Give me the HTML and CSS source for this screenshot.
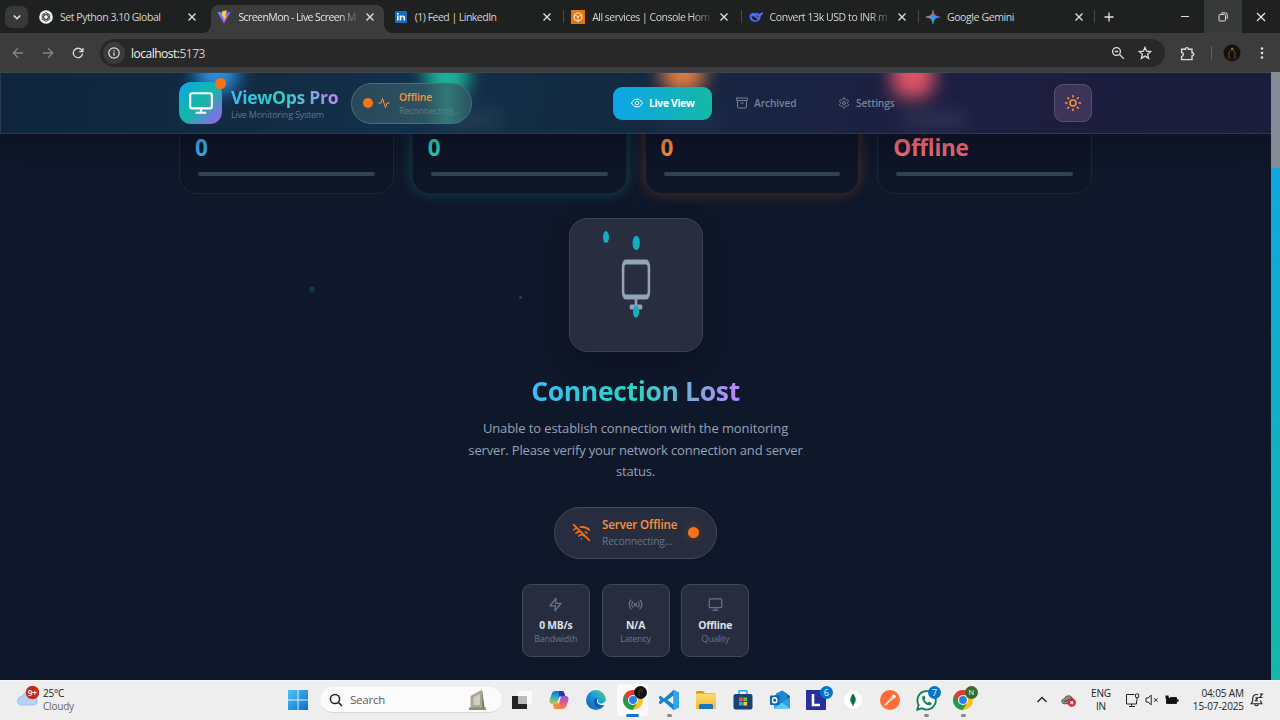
FILE: index.html
```html
<!DOCTYPE html>
<html lang="en">
<head>
<meta charset="utf-8">
<title>ScreenMon - Live Screen Monitor</title>
<link rel="stylesheet" href="styles.css">
</head>
<body>
<svg class="defs" aria-hidden="true">
  <defs>
    <linearGradient id="gGem" x1="0" x2="1"><stop offset="0" stop-color="#f6b51e"/><stop offset=".4" stop-color="#3d8df5"/><stop offset="1" stop-color="#4a8cf7"/></linearGradient>
    <linearGradient id="gWin" x1="0" y1="0" x2="1" y2="1"><stop offset="0" stop-color="#4cc4f5"/><stop offset="1" stop-color="#0a6fd0"/></linearGradient>
    <linearGradient id="gEdge" x1="0" y1="1" x2="1" y2="0"><stop offset="0" stop-color="#0b55a8"/><stop offset=".55" stop-color="#1b9de0"/><stop offset="1" stop-color="#5fd36a"/></linearGradient>
    <linearGradient id="gCopA" x1="0" y1="0" x2="0" y2="1"><stop offset="0" stop-color="#1769d6"/><stop offset=".5" stop-color="#2bb5c9"/><stop offset="1" stop-color="#e8bd2c"/></linearGradient>
    <linearGradient id="gCopB" x1="0" y1="0" x2="0" y2="1"><stop offset="0" stop-color="#8b5be8"/><stop offset=".5" stop-color="#e4578f"/><stop offset="1" stop-color="#f08a4a"/></linearGradient>
    <linearGradient id="gFold" x1="0" y1="0" x2="0" y2="1"><stop offset="0" stop-color="#ffdc6b"/><stop offset="1" stop-color="#f5b92f"/></linearGradient>
    <linearGradient id="gVite" x1="0" y1="0" x2="1" y2="1"><stop offset="0" stop-color="#41a6ff"/><stop offset=".6" stop-color="#a650fa"/><stop offset="1" stop-color="#8a3ff0"/></linearGradient>
    <linearGradient id="gDrop" x1="0" y1="0" x2="1" y2="1"><stop offset="0" stop-color="#0ea5e9"/><stop offset="1" stop-color="#14b8a6"/></linearGradient>
    <symbol id="close" viewBox="0 0 10 10"><path d="M1.5 1.5 8.5 8.5M8.5 1.5 1.5 8.5" stroke="#dcdedc" stroke-width="1.4" fill="none"/></symbol>
    <symbol id="monitor" viewBox="0 0 24 24"><rect x="2" y="3" width="20" height="14" rx="2"/><path d="M8 21h8M12 17v4"/></symbol>
    <symbol id="chrome" viewBox="0 0 24 24">
      <circle cx="12" cy="12" r="12" fill="#fbc116"/>
      <path d="M1.6 6A12 12 0 0 0 11.5 24L17.2 15 12 12Z" fill="#229a4b"/>
      <path d="M1.6 6A12 12 0 0 1 22.4 6H12L6.8 15Z" fill="#e33b2e"/>
      <circle cx="12" cy="12" r="6" fill="#fff"/><circle cx="12" cy="12" r="4.7" fill="#2f7de8"/>
    </symbol>
  </defs>
</svg>

<div class="tabstrip">
  <div class="tabsearch"><svg width="10" height="10" viewBox="0 0 10 10"><path d="M1.8 3.5 5 6.7l3.2-3.2" stroke="#e6e6e6" stroke-width="1.6" fill="none"/></svg></div>
  <div class="tabs">
    <div class="tab first"><svg class="fav" viewBox="0 0 14 14"><circle cx="7" cy="7" r="6.8" fill="#f4f4f4"/><g fill="none" stroke="#333" stroke-width=".8"><ellipse cx="7" cy="7" rx="2.2" ry="4.4"/><ellipse cx="7" cy="7" rx="2.2" ry="4.4" transform="rotate(60 7 7)"/><ellipse cx="7" cy="7" rx="2.2" ry="4.4" transform="rotate(120 7 7)"/></g></svg><span class="label t1">Set Python 3.10 Global</span><svg class="x"><use href="#close"/></svg></div>
    <div class="tab active"><svg class="fav" viewBox="0 0 14 14"><path d="M.3 1.8 7 13.8 13.7 1.8 7 3Z" fill="url(#gVite)"/><path d="M9.8.3 5.2 1.2 4.9 6.3l1.5-.3-.4 2.3 1.1-.3L6.6 10.9l3.2-5.5-1.8.3.9-2.1z" fill="#ffcf2e"/></svg><span class="label t2">ScreenMon - Live Screen M</span><svg class="x"><use href="#close"/></svg></div>
    <div class="tab"><svg class="fav" viewBox="0 0 14 14"><rect x="1" y="1" width="12" height="12" rx="1" fill="#1769c2"/><path d="M3 5.6h1.6v5H3zM3 3h1.6v1.6H3zM5.7 5.6h1.5v.8c.9-1.4 3.9-1.3 3.9 1.3v2.9H9.5V8c0-1.7-2.2-1.5-2.2 0v2.6H5.7z" fill="#fff"/></svg><span class="label t3">(1) Feed | LinkedIn</span><svg class="x"><use href="#close"/></svg></div>
    <div class="tab sep"><svg class="fav" viewBox="0 0 14 14"><rect width="14" height="14" fill="#e8750c"/><path d="M7 2.6 10.8 4.6V9.2L7 11.4 3.2 9.2V4.6ZM3.2 4.6 7 6.7l3.8-2.1M7 6.7v4.7" fill="none" stroke="#fff" stroke-width=".9"/></svg><span class="label t4">All services | Console Hom</span><svg class="x"><use href="#close"/></svg></div>
    <div class="tab sep"><svg class="fav" viewBox="0 0 14 14"><path d="M.5 6.2C1 3.3 4.300 2 7 3.400c1-.8 1-.9 1.300-1 .3 1 .9 1.500 2.300 1.400C11 2.800 12.600 3.500 14 2.300c.1 2-1 3-2.300 3.500C12 9 9 12.800 5.300 11.800 2 11 .3 9 .5 6.200Z" fill="#4d6bfe"/><path d="M2.300 6.500C5 5.500 7.300 7.500 8.800 10.300 6 10.800 3 9.500 2.300 6.500Z" fill="#1f2120"/><path d="M7.600 6c1-.4 2 .3 2.100 1.400" stroke="#1f2120" fill="none"/></svg><span class="label t5">Convert 13k USD to INR m</span><svg class="x"><use href="#close"/></svg></div>
    <div class="tab sep end"><svg class="fav" viewBox="0 0 14 14"><path d="M7 0C7.600 4.600 9.400 6.400 14 7 9.400 7.600 7.600 9.400 7 14 6.400 9.400 4.600 7.600 0 7 4.600 6.400 6.400 4.600 7 0Z" fill="url(#gGem)" stroke="url(#gGem)" stroke-width=".6"/><path d="M7 0c.3 2.600 1 4.200 2.300 5.300L6 5C6.600 3.900 6.800 2 7 0Z" fill="#e9473b"/><path d="M7 14c-.3-2.600-1-4.200-2.300-5.300L8 9C7.400 10.100 7.200 12 7 14Z" fill="#3bb55e"/></svg><span class="label t6">Google Gemini</span><svg class="x"><use href="#close"/></svg></div>
  </div>
  <svg class="plus" viewBox="0 0 10 10"><path d="M5 .5v9M.5 5h9" stroke="#e3e3e3" stroke-width="1.300"/></svg>
  <div class="winbtns">
    <span><svg width="10" height="10"><path d="M1 4.500h8" stroke="#ddd"/></svg></span>
    <span class="hover"><svg width="10" height="10" viewBox="0 0 10 10" fill="none" stroke="#ddd"><rect x="1" y="2.500" width="6.500" height="6.500" rx="1"/><path d="M3 .9h4.500A1.600 1.600 0 0 1 9.200 2.500V7"/></svg></span>
    <span><svg width="10" height="10"><path d="m1 1 8 8M9 1 1 9" stroke="#eee" stroke-width="1.100"/></svg></span>
  </div>
</div>

<div class="toolbar">
  <div class="nav">
    <svg viewBox="0 0 12 12" class="dim"><path d="M11 6H1.500M6 1.300 1.300 6 6 10.700"/></svg>
    <svg viewBox="0 0 12 12" class="dim"><path d="M1 6h9.500M6 1.300 10.700 6 6 10.700"/></svg>
    <svg viewBox="0 0 12 12"><path d="M10.600 6.700A4.700 4.700 0 1 1 9.700 3.100L10.800 4.500M10.900 1v3.700H7.200"/></svg>
  </div>
  <div class="omnibox">
    <span class="info"><svg width="12" height="12" viewBox="0 0 12 12" fill="none" stroke="#dfe1df" stroke-width="1.200"><circle cx="6" cy="6" r="5.200"/><path d="M6 5.200v3.600M6 3v1.200"/></svg></span>
    <span class="url"><b>localhost:</b>5173</span>
    <svg class="ob" viewBox="0 0 14 14"><circle cx="5.500" cy="5.500" r="3.900"/><path d="m8.500 8.500 4.400 4.400M3.800 5.500h3.400"/></svg>
    <svg class="ob" viewBox="0 0 14 14"><path d="M7 1.400 8.600 5.200l4.200.3-3.200 2.700 1 4.100L7 10.100l-3.600 2.200 1-4.100L1.200 5.500l4.200-.3Z"/></svg>
  </div>
  <svg class="ext" viewBox="0 0 14 14"><path d="M1.500 3H5c0-2 2.800-2 2.800 0h3.400v3.300c2.200 0 2.200 3 0 3V12.700H1.500V9.700c2.200-.2 2.200-3.400 0-3.600Z"/></svg>
  <i class="tsep"></i>
  <svg class="avatar" viewBox="0 0 18 18"><circle cx="9" cy="9" r="8.500" fill="#16110c"/><path d="M6 15V9l1.500-3M10.500 6l1.500 3-.5 2 1 4" stroke="#4a361b" stroke-width="1.600" fill="none"/><circle cx="9.200" cy="5" r="1.300" fill="#8b7142"/></svg>
  <svg class="dots" viewBox="0 0 4 14" fill="#ddd"><circle cx="2" cy="2.500" r="1.300"/><circle cx="2" cy="7" r="1.300"/><circle cx="2" cy="11.500" r="1.300"/></svg>
</div>

<div class="view">
  <div class="page">
    <header class="topbar">
      <i class="glow g1"></i><i class="glow g2"></i><i class="glow g3"></i><i class="glow g4"></i><i class="haze h1"></i><i class="haze h2"></i><i class="haze h3"></i>
      <div class="bar">
        <div class="logo"><svg class="line" width="26" height="26"><use href="#monitor"/></svg><i></i></div>
        <div class="brand"><h1><span>ViewOps Pro</span></h1><p>Live Monitoring System</p></div>
        <div class="status">
          <i></i>
          <svg width="12" height="12" viewBox="0 0 24 24" class="line"><path d="M22 12h-4l-3 9L9 3l-3 9H2"/></svg>
          <div><b>Offline</b><small>Reconnecting...</small></div>
        </div>
        <nav>
          <a class="on"><svg class="line" width="12" height="12" viewBox="0 0 24 24"><path d="M1 12s4-8 11-8 11 8 11 8-4 8-11 8S1 12 1 12Z"/><circle cx="12" cy="12" r="3.500"/></svg><span class="n1">Live View</span></a>
          <a class="arch"><svg class="line" width="12" height="12" viewBox="0 0 24 24"><rect x="1" y="2" width="22" height="5" rx="1"/><path d="M3 7v13a2 2 0 0 0 2 2h14a2 2 0 0 0 2-2V7M9.500 12h5"/></svg><span class="n2">Archived</span></a>
          <a><svg class="line" width="12" height="12" viewBox="0 0 24 24"><path d="M12.220 2h-.44a2 2 0 0 0-2 2v.18a2 2 0 0 1-1 1.730l-.43.25a2 2 0 0 1-2 0l-.15-.08a2 2 0 0 0-2.730.73l-.22.38a2 2 0 0 0 .73 2.730l.15.1a2 2 0 0 1 1 1.720v.51a2 2 0 0 1-1 1.740l-.15.09a2 2 0 0 0-.73 2.730l.22.38a2 2 0 0 0 2.730.73l.15-.08a2 2 0 0 1 2 0l.43.25a2 2 0 0 1 1 1.730V20a2 2 0 0 0 2 2h.44a2 2 0 0 0 2-2v-.18a2 2 0 0 1 1-1.730l.43-.25a2 2 0 0 1 2 0l.15.08a2 2 0 0 0 2.730-.73l.22-.39a2 2 0 0 0-.73-2.730l-.15-.08a2 2 0 0 1-1-1.740v-.5a2 2 0 0 1 1-1.740l.15-.09a2 2 0 0 0 .73-2.730l-.22-.38a2 2 0 0 0-2.730-.73l-.15.08a2 2 0 0 1-2 0l-.43-.25a2 2 0 0 1-1-1.730V4a2 2 0 0 0-2-2z"/><circle cx="12" cy="12" r="3"/></svg><span class="n3">Settings</span></a>
        </nav>
        <div class="theme"><svg class="line" width="18" height="18" viewBox="0 0 24 24"><circle cx="12" cy="12" r="4"/><path d="M12 2v2M12 20v2M4.930 4.930l1.410 1.410M17.660 17.660l1.410 1.410M2 12h2M20 12h2M6.340 17.660l-1.410 1.410M19.070 4.930l-1.410 1.410"/></svg></div>
      </div>
    </header>

    <section class="stats">
      <div class="stat blue"><b>0</b><i></i></div>
      <div class="stat teal"><b>0</b><i></i></div>
      <div class="stat orange"><b>0</b><i></i></div>
      <div class="stat red"><b>Offline</b><i></i></div>
    </section>

    <i class="particle p1"></i><i class="particle p2"></i>

    <main class="lost">
      <div class="screen">
        <svg width="134" height="134" viewBox="0 0 134 134">
          <svg x="51.500" y="36.500" width="31" height="60" viewBox="0 0 24 24" preserveAspectRatio="none" fill="none" stroke="#94a3b8" stroke-width="2" stroke-linecap="round"><rect x="2" y="3" width="20" height="14" rx="2"/><path d="M8 21h8M12 17v4"/></svg>
          <ellipse cx="37" cy="19" rx="3" ry="6" fill="url(#gDrop)"/><ellipse cx="67.200" cy="25" rx="3.700" ry="7.200" fill="url(#gDrop)"/><ellipse cx="67" cy="93.500" rx="3" ry="6.200" fill="url(#gDrop)"/>
        </svg>
      </div>
      <h2><span>Connection Lost</span></h2>
      <p class="l1">Unable to establish connection with the monitoring</p>
      <p class="l2">server. Please verify your network connection and server</p>
      <p class="l3">status.</p>
      <div class="server">
        <svg class="line" width="19" height="19" viewBox="0 0 24 24"><path d="M12 20h.01M8.500 16.430a5 5 0 0 1 7 0M2 8.820a15 15 0 0 1 4.170-2.650M10.660 5a15 15 0 0 1 11.340 3.760M16.850 11.250a10 10 0 0 1 2.220 1.680M5 13a10 10 0 0 1 5.240-2.760M2 2l20 20"/></svg>
        <div><b>Server Offline</b><small>Reconnecting...</small></div>
        <i></i>
      </div>
      <div class="metrics">
        <div><svg class="line" width="15" height="15" viewBox="0 0 24 24"><path d="M13 2 3 14h9l-1 8 10-12h-9l1-8z"/></svg><b>0 MB/s</b><small>Bandwidth</small></div>
        <div><svg class="line" width="15" height="15" viewBox="0 0 24 24"><circle cx="12" cy="12" r="2"/><path d="M4.900 19.100C1 15.200 1 8.800 4.900 4.900M7.800 16.200c-2.300-2.300-2.300-6.100 0-8.500M16.200 7.800c2.300 2.300 2.300 6.100 0 8.500M19.100 4.900C23 8.800 23 15.100 19.100 19"/></svg><b>N/A</b><small>Latency</small></div>
        <div><svg class="line" width="15" height="15"><use href="#monitor"/></svg><b>Offline</b><small>Quality</small></div>
      </div>
    </main>
  </div>
  <div class="scroll"><i></i></div>
</div>

<footer class="taskbar">
  <div class="weather">
    <svg width="24" height="24" viewBox="0 0 24 24"><path d="M6 20h12.500a4 4 0 0 0 .5-7.900A6.500 6.500 0 0 0 7 11.500 4.300 4.300 0 0 0 6 20Z" fill="#b8d2f6" stroke="#8fb5ea" stroke-width=".8"/><circle cx="17.500" cy="7.500" r="6.800" fill="#c42b1c"/><text x="17.300" y="10.900" class="cnt">9+</text></svg>
    <div><span>25°C</span><em>Cloudy</em></div>
  </div>
  <div class="apps">
    <span class="app start"><svg width="20" height="20" viewBox="0 0 20 20" fill="url(#gWin)"><path d="M0 0h9.500v9.500H0zM10.500 0H20v9.500h-9.500zM0 10.500h9.500V20H0zM10.500 10.500H20V20h-9.500z"/></svg></span>
    <div class="search"><svg width="14" height="14" viewBox="0 0 14 14" fill="none" stroke="#222" stroke-width="1.500"><circle cx="6" cy="6" r="4.600"/><path d="m9.400 9.400 3.600 3.600"/></svg><span>Search</span><svg width="17" height="21" viewBox="0 0 17 21"><path d="M1.500 19V7L13 .8 15.500 19Z" fill="#aaa594"/><path d="M4.500 16V8L11 5v11Z" fill="#d2cec2"/><path d="M13 .8 15.500 19h-2Z" fill="#716c5b"/><path d="M0 18.500h17V21H0Z" fill="#918a72"/></svg></div>
    <span class="app"><svg width="20" height="20" viewBox="0 0 20 20"><rect x="6" y="1" width="14" height="13" fill="#fafafa"/><rect x="0" y="6" width="15" height="13" fill="#252525"/><rect x="6" y="6" width="9" height="8" fill="#bbb"/></svg></span>
    <span class="app"><svg width="20" height="20" viewBox="0 0 20 20"><path d="M6.500 1H13L9.500 14H4C0 14 0 11.500 1.200 8L3 3Q3.800 1 6.500 1Z" fill="url(#gCopA)"/><path d="M13.500 19H7L10.500 6H16c4 0 4 2.500 2.800 6L17 17Q16.200 19 13.500 19Z" fill="url(#gCopB)"/><path d="M10 1h3.500c1.500 0 2 2 2.700 5h-4.500c-1 0-1.500 1-2 3Z" fill="#203ea5"/><path d="M10 19H6.500C5 19 4.500 17 4 14h4c1.200 0 1.800-1 2.300-3l1 1Z" fill="#f28c43"/><path d="M10.300 6.800h1.700L9.800 13.200H8.200Z" fill="#f3f0f2"/></svg></span>
    <span class="app"><svg width="20" height="20" viewBox="0 0 20 20"><circle cx="10" cy="10" r="10" fill="url(#gEdge)"/><path d="M8 13C7 8 11 7.400 12 9.500 12.700 11 11.600 12 13.500 13.200 15.500 14.500 18 13.500 18.700 13.200 16 20.300 8.500 18.500 8 13Z" fill="#0e59ac"/><path d="M11.600 8.700c1.300 1.300-.3 3 1.600 4.200 2 1.200 6.200.3 6.700-2.900L20 15 16 15.300c-4.500-.2-6-4-4.400-6.600Z" fill="#eef5f5"/></svg></span>
    <span class="app current"><svg width="20" height="20"><use href="#chrome"/></svg><svg class="badge" width="13" height="13"><circle cx="6.500" cy="6.500" r="6.500" fill="#171009"/><path d="M5 10V5l3-2v4" stroke="#50391b" fill="none"/></svg></span>
    <span class="app run"><svg width="20" height="20" viewBox="0 0 20 20"><path d="M14.500 0 20 2.500v15L14.500 20 5 11.600 1.500 14.200 0 13.200V6.800l1.500-1L5 8.400Z" fill="#1685ce"/><path d="M14.500 5.500v9L8.500 10Z" fill="#eee"/><path d="m14.500 0 5.500 2.500v15L14.500 20Z" fill="#31a5ef"/><path d="M0 8.200 1.500 10 0 11.800Z" fill="#eee"/></svg></span>
    <span class="app"><svg width="20" height="20" viewBox="0 0 20 20"><path d="M0 2.500Q0 1 1.500 1H7l2 2h10v4H0Z" fill="#d99a19"/><rect y="3.500" width="20" height="15.500" rx="1.300" fill="url(#gFold)"/><path d="M3 19v-3.500Q3 14 4.500 14h11Q17 14 17 15.500V19Z" fill="#1876bd"/></svg></span>
    <span class="app"><svg width="20" height="20" viewBox="0 0 20 20"><path d="M6 5V1.500Q6 .7 7 .7h6q1 0 1 .8V5" stroke="#2ca6dc" stroke-width="1.500" fill="none"/><rect x=".5" y="4" width="19" height="15.500" rx="2" fill="#174276"/><path d="M6 7.500h3.700v3.700H6z" fill="#ef5538"/><path d="M10.400 7.500h3.700v3.700h-3.700z" fill="#7cba38"/><path d="M6 11.900h3.700v3.700H6z" fill="#35a7e6"/><path d="M10.400 11.900h3.700v3.700h-3.700z" fill="#fac42c"/></svg></span>
    <span class="app"><svg width="20" height="20" viewBox="0 0 20 20"><path d="m4 6 8-5.500L20 6v12H4Z" fill="#1262ae"/><path d="M6 3.500 12 .8l5 2.700V12H6Z" fill="#1f86cf"/><path d="m20 7-9 6-7-5v10.500h16Z" fill="#2c9fe0"/><path d="m4 18.500 8-6 8 6Z" fill="#54cef5"/><rect y="5.500" width="9.500" height="9.500" rx="1" fill="#0769bd"/><ellipse cx="4.700" cy="10.200" rx="2.200" ry="2.500" fill="none" stroke="#fff" stroke-width="1.400"/></svg></span>
    <span class="app"><svg width="20" height="20"><rect width="20" height="20" fill="#2630a0"/><path d="M7 4v11h7" stroke="#fff" stroke-width="2.600" fill="none"/></svg><b class="badge">6</b></span>
    <span class="app"><svg width="18" height="18" viewBox="0 0 18 18"><circle cx="9" cy="9" r="9" fill="#fff"/><path d="M9 3c4 4 3.500 8 0 11C5.500 11 5 7 9 3Z" fill="#12824c"/><path d="M9 3v12" stroke="#0a4e30"/></svg></span>
    <span class="app"><svg width="20" height="20" viewBox="0 0 20 20"><circle cx="10" cy="10" r="10" fill="#ff6c37"/><path d="m5 14 7-7 1.500 1.500-6 5Z" fill="#fff"/><path d="M4.500 15.200 8 13.500" stroke="#fff"/><circle cx="13.700" cy="6.500" r="2" fill="#fff"/><path d="m9 11 4-3.500" stroke="#ff6c37" stroke-width=".7"/></svg></span>
    <span class="app run"><svg width="21" height="21" viewBox="0 0 24 24"><path d="M1.500 22.500 3 17A10.500 10.500 0 1 1 7 21Z" fill="#fff" stroke="#168051" stroke-width="2.200"/><path d="M8 6.500c-3 2.500 1.500 10.500 7 11 2.500 0 3.500-2 2.500-3L15 13l-1.500 1.500C12 14 10.500 12.500 9.700 11L11 9.500 9.700 6.800Z" fill="#168051"/></svg><b class="badge">7</b></span>
    <span class="app run"><svg width="20" height="20"><use href="#chrome"/></svg><b class="badge green">N</b></span>
  </div>
  <div class="tray">
    <svg class="chev" viewBox="0 0 10 10"><path d="m.5 7 4.500-4.500L9.500 7" stroke="#222" stroke-width="1.300" fill="none"/></svg>
    <svg class="cloud" viewBox="0 0 14 12"><path d="M3 9C-.5 8.500.3 4.500 3 4.500 4.500.5 10 1 10.500 4L13 6v3Z" fill="#8d8d8d" stroke="#444" stroke-width=".8"/><path d="m3 7 8-3" stroke="#444"/><circle cx="10" cy="8" r="3.900" fill="#dc2638"/><path d="m8.700 6.700 2.600 2.600m0-2.600L8.700 9.300" stroke="#fff"/></svg>
    <div class="lang">ENG<br>IN</div>
    <svg class="net" viewBox="0 0 15 15" fill="none" stroke="#222"><path d="M9.500 1.500H1.500v9.500h10V8M4 13.500h6M6.500 11v2.500"/><rect x="10.500" y="1" width="3.200" height="3.500" rx=".6"/><path d="M12 4.500V8"/></svg>
    <svg class="vol" viewBox="0 0 14 12" fill="none" stroke="#222"><path d="M1 4h2l3.200-2.800v9.600L3 8H1ZM9 4.300l3.500 3.500M12.500 4.300 9 7.800"/></svg>
    <svg class="bat" viewBox="0 0 14 12"><path d="M1.500 3.500h10v6h-10z" fill="#111" stroke="#222"/><path d="M12 5.200h1.500v2.600H12zM.5 1.500h3v3h-3z" fill="#111"/><path d="M4.500 1v3" stroke="#eee"/></svg>
    <div class="clock"><span>04:05 AM</span><span>15-07-2025</span></div>
    <svg class="bell" viewBox="0 0 13 13" fill="none" stroke="#222"><path d="M7.500 1.700C4.500.6 2.500 2.800 2.500 5v2.500L1 10h10L9.700 7.500V7M4.500 10.500c.5 1.800 2.700 1.800 3.200 0M5 4.500h2.300L5 7.200h2.500M9 1h2.500L9 4.200h2.600"/></svg>
  </div>
</footer>
</body>
</html>
```

FILE: styles.css
```css
* { box-sizing: border-box; }
body { margin: 0; width: 1280px; height: 720px; overflow: hidden; display: flex; flex-direction: column; font-family: "Open Sans", "Noto Sans", sans-serif; background: #0f172a; }
svg { flex: none; display: block; }
.defs { position: absolute; width: 0; height: 0; }
h1, h2, p { margin: 0; }
i, em { font-style: normal; }
small, b, em { display: block; }
.line { fill: none; stroke: currentColor; stroke-width: 2; stroke-linecap: round; stroke-linejoin: round; }

/* browser tabs */
.tabstrip { height: 33px; flex: none; background: #1f2120; display: flex; align-items: center; }
.tabsearch { width: 23px; height: 22px; margin-left: 5px; border-radius: 7px; background: #383a39; display: flex; align-items: center; justify-content: center; }
.tabs { display: flex; margin-left: 3px; align-self: stretch; }
.tab { width: 177.4px; display: flex; align-items: center; padding-left: 8px; position: relative; }
.tab.active { background: #3c3c3c; border-radius: 8px 8px 0 0; margin: 5px 2px 0 3px; width: 172.400px; padding: 0 0 5px 6px; }
.tab.active::before, .tab.active::after { content: ""; position: absolute; bottom: 0; width: 8px; height: 8px; }
.tab.active::before { left: -8px; background: radial-gradient(circle at 0 0, #1f2120 7.500px, #3c3c3c 8px); }
.tab.active::after { right: -8px; background: radial-gradient(circle at 100% 0, #1f2120 7.500px, #3c3c3c 8px); }
.tab.sep { background: linear-gradient(#474948, #474948) 0 50% / 1px 13px no-repeat; }
.tab.end { background: linear-gradient(#474948, #474948) 0 50% / 1px 13px no-repeat, linear-gradient(#474948, #474948) 100% 50% / 1px 13px no-repeat; }
.fav { width: 14px; height: 14px; margin-right: 7px; }
.label { width: 127px; font-size: 10.500px; color: #d3d5d4; white-space: nowrap; line-height: 16px; }
.t1 { letter-spacing: -.45px; }
.t2 { letter-spacing: -.57px; color: #e6e6e6; }
.t3 { letter-spacing: -.52px; }
.t4 { letter-spacing: -.5px; }
.t5 { letter-spacing: -.42px; }
.t6 { letter-spacing: -.4px; }
.t2, .t4, .t5 { -webkit-mask: linear-gradient(90deg, #000 100px, transparent 122px); mask: linear-gradient(90deg, #000 100px, transparent 122px); }
.x { width: 10px; height: 10px; }
.plus { width: 10px; height: 10px; margin-left: 9px; }
.winbtns { display: flex; margin-left: auto; align-self: stretch; }
.winbtns span { width: 38px; display: flex; align-items: center; justify-content: center; }
.winbtns .hover { background: #383a39; }

/* address bar */
.toolbar { height: 39px; flex: none; background: #3c3c3c; display: flex; align-items: center; padding-top: 1px; }
.nav { display: flex; gap: 18px; margin-left: 12px; }
.nav svg, .ob, .ext { fill: none; stroke: #dcdcdc; stroke-width: 1.300; width: 12px; height: 12px; }
.nav .dim { stroke: #858585; }
.omnibox { width: 1065px; height: 28px; margin-left: 16px; border-radius: 14px; background: #282828; display: flex; align-items: center; }
.info { width: 22px; height: 22px; margin-left: 3px; border-radius: 50%; background: #3b3b3b; display: flex; align-items: center; justify-content: center; }
.url { flex: 1; margin-left: 6px; font-size: 12px; letter-spacing: -.5px; color: #c9c9c9; }
.url b { display: inline; font-weight: 400; color: #f0f0f0; }
.omnibox .ob { width: 14px; height: 14px; margin-right: 13px; }
.toolbar .ext { width: 15px; height: 15px; margin-left: 15px; }
.tsep { width: 1px; height: 14px; background: #616161; margin-left: 16px; }
.avatar { width: 18px; height: 18px; margin-left: 11px; }
.dots { width: 4px; height: 14px; margin-left: 19px; }

/* app */
.view { height: 608px; flex: none; display: flex; }
.page { width: 1271px; height: 608px; overflow: hidden; position: relative; background: #0f172a; }
.scroll { width: 9px; background: linear-gradient(#0ea5e9, #14b8a6); }
.scroll i { display: block; height: 96px; background: #858c98; }

.topbar { height: 62px; position: relative; z-index: 2; overflow: hidden; border: 1px solid #2b3a52; border-width: 1px 0 1px 1px; border-top-color: #3c464e; background: linear-gradient(100deg, #10253e 0%, #122b43 20%, #12304a 31%, #132a42 48%, #1a2442 60%, #1d1e41 75%, #1c1c3b 100%); box-shadow: 0 8px 24px rgba(5, 8, 20, .3); }
.glow { position: absolute; top: -22px; width: 42px; height: 42px; border-radius: 16px; filter: blur(9px); opacity: .9; }
.g1 { left: 195px; background: #2b9cf0; }
.g2 { left: 425px; background: #20bfa5; height: 48px; }
.g3 { left: 661px; background: #f58543; }
.g4 { left: 891px; background: #f25a6b; height: 47px; }
.haze { position: absolute; top: 38px; height: 18px; width: 64px; filter: blur(9px); background: #64748b; opacity: .22; }
.h1 { left: 436px; } .h2 { left: 902px; } .h3 { left: 655px; opacity: .1; }
.bar { position: relative; width: 913px; height: 60px; margin-left: 178px; display: flex; align-items: center; }
.logo { position: relative; width: 43px; height: 42px; border-radius: 12px; background: linear-gradient(135deg, #0ea5e9, #14b8a6 50%, #a855f7); color: #fff; display: flex; align-items: center; justify-content: center; }
.logo i { position: absolute; right: -4px; top: -4px; width: 11px; height: 11px; border-radius: 50%; background: #f97316; }
.brand { width: 111px; margin-left: 9px; }
h1, h2 { font-weight: 700; }
h1 span, h2 span { background: linear-gradient(90deg, #38bdf8, #2dd4bf 50%, #c084fc); -webkit-background-clip: text; background-clip: text; color: transparent; white-space: nowrap; }
h1 { font-size: 17.500px; line-height: 22px; letter-spacing: -.24px; margin-top: 1px; }
.brand p { font-size: 9px; line-height: 12px; letter-spacing: -.22px; color: #64748b; white-space: nowrap; margin-top: 1px; }
.status { width: 121px; height: 41px; margin-left: 9px; border-radius: 21px; border: 1px solid #47707f; background: linear-gradient(90deg, #29485a, #2c5261 60%, #327977 80%, #2b5261); display: flex; align-items: center; padding-left: 11px; }
.status i { width: 10px; height: 10px; border-radius: 50%; background: #f97316; }
.status svg { margin: 0 9px 0 5px; color: #fb923c; }
.status b { font-size: 10.300px; font-weight: 600; line-height: 14px; letter-spacing: -.1px; color: #fb923c; }
.status small { font-size: 9px; line-height: 13px; letter-spacing: -.2px; color: #64798a; }
nav { display: flex; gap: 4px; margin-left: 141px; font-size: 10.300px; font-weight: 600; color: #73819a; }
nav a { height: 33px; display: flex; align-items: center; gap: 6px; padding: 0 20px; white-space: nowrap; border-radius: 9px; }
nav .on { width: 99px; padding: 0 0 0 18px; background: linear-gradient(90deg, #0ea5e9, #14b8a6); color: #fff; }
nav .on span { font-weight: 700; letter-spacing: -.3px; }
nav .arch { width: 98px; padding-right: 0; }
.n2, .n3 { letter-spacing: -.15px; }
.theme { width: 38px; height: 38px; margin-left: auto; border-radius: 9px; border: 1px solid #5a4f70; background: #3e345a; color: #fb923c; display: flex; align-items: center; justify-content: center; }

.stats { width: 913px; margin: -20px 0 0 179px; display: grid; grid-template-columns: repeat(4, 1fr); gap: 18px; }
.stat { height: 80px; border: 1px solid #1d2639; border-radius: 0 0 18px 18px; background: #0e1527; padding: 19px 18px 0 15px; }
.stat b { font-size: 22.500px; line-height: 28px; letter-spacing: -.25px; }
.stat i { display: block; height: 4px; border-radius: 2px; background: #334155; margin: 10px 0 0 3px; }
.blue b { color: #38a9ea; } .teal b { color: #2dc4ae; } .orange b { color: #ef8b3e; } .red b { color: #ec6875; }
.teal { border-color: #10262f; box-shadow: 0 0 14px rgba(20, 184, 166, .3); }
.orange { border-color: #241e25; box-shadow: 0 0 14px rgba(249, 115, 22, .28); }

.particle { position: absolute; border-radius: 50%; background: #12344c; }
.p1 { left: 309px; top: 214px; width: 6px; height: 6px; }
.p2 { left: 519px; top: 224px; width: 3px; height: 3px; background: #27405a; }

.lost { display: flex; flex-direction: column; align-items: center; padding-top: 24px; }
.screen { width: 134px; height: 134px; border-radius: 18px; border: 1px solid #3a4154; background: #282d3f; box-shadow: 0 10px 24px rgba(5, 9, 24, .35); }
.screen > svg { margin: -1px; }
h2 { font-size: 26.500px; line-height: 34px; margin-top: 22px; letter-spacing: -.34px; }
.lost p { font-size: 13px; line-height: 21.700px; letter-spacing: -.16px; color: #94a3b8; white-space: nowrap; }
.lost p.l1 { margin-top: 10px; letter-spacing: -.1px; }
.server { width: 163px; height: 52px; margin-top: 23.500px; border-radius: 26px; border: 1px solid #434a5c; background: #272d3f; display: flex; align-items: center; padding-left: 17px; color: #fb923c; }
.server > svg { color: #f9731b; }
.server > div { width: 76px; margin-left: 11px; white-space: nowrap; }
.server b { font-size: 11.600px; font-weight: 600; line-height: 17px; letter-spacing: -.12px; }
.server small { font-size: 10.300px; line-height: 16px; letter-spacing: -.17px; color: #64748b; }
.server i { width: 11px; height: 11px; margin-left: 10px; border-radius: 50%; background: #f97316; box-shadow: 0 0 10px rgba(249, 115, 22, .3); }
.metrics { display: flex; gap: 11.700px; margin-top: 25px; }
.metrics div { width: 68px; height: 73px; border: 1px solid #41485a; border-radius: 9px; background: #272d3f; color: #64748b; display: flex; flex-direction: column; align-items: center; padding-top: 12px; }
.metrics b { font-size: 10.300px; line-height: 15px; margin-top: 6px; color: #dbe2ec; letter-spacing: -.2px; }
.metrics small { font-size: 9px; line-height: 12px; letter-spacing: -.25px; }

/* desktop taskbar */
.taskbar { height: 40px; flex: none; background: #eee; border-top: 1px solid #f5f5f5; display: flex; align-items: center; color: #222; font-size: 10px; padding-bottom: 1px; }
.weather { width: 280px; display: flex; padding-left: 15px; gap: 4px; align-items: center; line-height: 13px; letter-spacing: -.2px; }
.weather svg { margin-top: -6px; }
.weather em { color: #666; }
.cnt { font: 600 8.500px "Open Sans", sans-serif; fill: #fff; text-anchor: middle; }
.apps { display: flex; align-items: center; height: 100%; }
.app { width: 36.750px; height: 34px; display: flex; align-items: center; justify-content: center; position: relative; }
.app.start { width: 36px; }
.search { width: 182px; height: 26px; margin: 0 2px 0 4px; border-radius: 13px; background: #fbfbfb; border-bottom: 1px solid #d6d6d6; display: flex; align-items: center; padding-left: 9px; }
.search span { width: 119px; margin-left: 7px; font-size: 11.500px; color: #5c5c5c; letter-spacing: -.2px; }
.badge { position: absolute; right: 2px; top: 3px; width: 13px; height: 13px; border-radius: 50%; background: #0873cf; color: #fff; font-size: 9px; line-height: 13px; text-align: center; font-weight: 400; }
.run .badge { right: 4px; }
.current .badge { right: 4px; }
.badge.green { background: #34702c; font-size: 7.500px; }
.current::before { content: ""; position: absolute; inset: 1px 3px; border-radius: 4px; background: #fafafa; z-index: -1; }
.current { z-index: 0; }
.current::after, .run::after { content: ""; position: absolute; bottom: 0; left: 12px; width: 13px; height: 3px; border-radius: 2px; background: #1575c8; }
.run::after { left: 16px; width: 5px; background: #888; }
.tray { display: flex; align-items: center; margin-left: auto; margin-right: 16px; line-height: 13px; }
.chev { width: 10px; height: 10px; margin-right: 14px; }
.cloud { width: 15px; height: 13px; margin-right: 13px; }
.lang { width: 24px; text-align: center; letter-spacing: -.2px; }
.net { width: 15px; height: 15px; margin-left: 12px; }
.vol { width: 14px; height: 12px; margin-left: 5px; }
.bat { width: 14px; height: 12px; margin-left: 6px; }
.clock { width: 65px; text-align: right; letter-spacing: -.1px; }
.clock span { display: block; white-space: nowrap; }
.bell { width: 14px; height: 14px; margin-left: 6px; }
```
